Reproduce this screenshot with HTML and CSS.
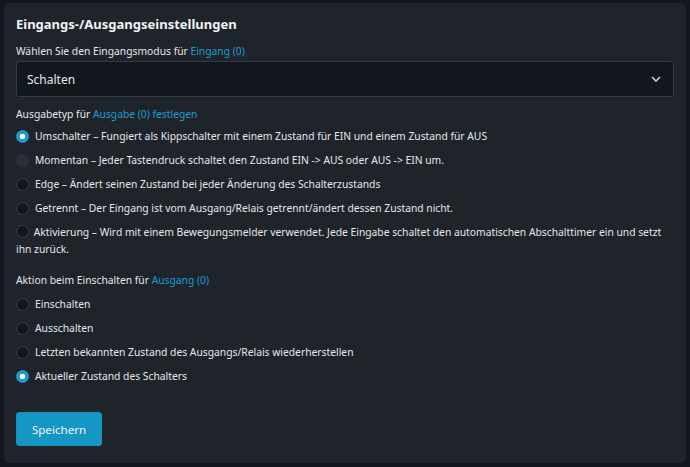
FILE: index.html
```html
<!DOCTYPE html>
<html lang="de">
<head>
<meta charset="utf-8">
<link rel="stylesheet" href="styles.css">
</head>
<body>
<div class="card">
  <h1 class="title">Eingangs-/Ausgangseinstellungen</h1>
  <div class="label">Wählen Sie den Eingangsmodus für <span class="link">Eingang (0)</span></div>
  <div class="select">
    <span>Schalten</span>
    <svg class="chev" width="10" height="6" viewBox="0 0 10 6"><path d="M1 1l4 4 4-4" fill="none" stroke="#c9ced4" stroke-width="1.6"/></svg>
  </div>
  <div class="label">Ausgabetyp für <span class="link">Ausgabe (0) festlegen</span></div>
  <div class="group">
    <div class="opt"><span class="radio on"></span><span>Umschalter – Fungiert als Kippschalter mit einem Zustand für EIN und einem Zustand für AUS</span></div>
    <div class="opt"><span class="radio dim"></span><span>Momentan – Jeder Tastendruck schaltet den Zustand EIN -&gt; AUS oder AUS -&gt; EIN um.</span></div>
    <div class="opt"><span class="radio"></span><span>Edge – Ändert seinen Zustand bei jeder Änderung des Schalterzustands</span></div>
    <div class="opt"><span class="radio"></span><span>Getrennt – Der Eingang ist vom Ausgang/Relais getrennt/ändert dessen Zustand nicht.</span></div>
    <div class="opt wrap"><span class="radio"></span> Aktivierung – Wird mit einem Bewegungsmelder verwendet. Jede Eingabe schaltet den automatischen Abschalttimer ein und setzt ihn zurück.</div>
  </div>
  <div class="label second">Aktion beim Einschalten für <span class="link">Ausgang (0)</span></div>
  <div class="group second">
    <div class="opt"><span class="radio"></span><span>Einschalten</span></div>
    <div class="opt"><span class="radio"></span><span>Ausschalten</span></div>
    <div class="opt"><span class="radio"></span><span>Letzten bekannten Zustand des Ausgangs/Relais wiederherstellen</span></div>
    <div class="opt"><span class="radio on"></span><span>Aktueller Zustand des Schalters</span></div>
  </div>
  <button class="btn">Speichern</button>
</div>
</body>
</html>
```
FILE: styles.css
```css
html, body {
  margin: 0;
  padding: 0;
  background: #13171d;
}
body {
  padding: 3px 4px 4px 4px;
  font-family: "Noto Sans", "Open Sans", sans-serif;
  font-size: 10.3px;
  color: #e4e7ea;
}
.card {
  background: #1f242b;
  border-radius: 6px;
  padding: 12px 12px 16px 12px;
  height: 460px;
  box-sizing: border-box;
}
.title {
  margin: 0 0 10px 0;
  font-size: 13px;
  font-weight: 700;
  line-height: 18px;
  color: #f0f2f4;
}
.label {
  line-height: 16px;
  margin-bottom: 2px;
}
.label.second {
  margin-top: 14px;
}
.link {
  color: #1e9bd2;
}
.select {
  display: flex;
  align-items: center;
  justify-content: space-between;
  height: 36px;
  box-sizing: border-box;
  background: #12171d;
  border: 1px solid #343b44;
  border-radius: 3px;
  padding: 0 10px 0 10px;
  margin-bottom: 9px;
  font-size: 12px;
}
.chev {
  margin-right: 2px;
}
.group {
  display: flex;
  flex-direction: column;
  gap: 8px;
  margin-top: 6px;
}
.group.second {
  margin-top: 8px;
}
.opt {
  display: flex;
  align-items: center;
  gap: 6px;
  line-height: 16px;
}
.opt.wrap {
  display: block;
  line-height: 17px;
}
.radio {
  display: inline-block;
  flex: none;
  width: 13px;
  height: 13px;
  box-sizing: border-box;
  border-radius: 50%;
  background: #13171d;
  border: 1px solid #3b424b;
  vertical-align: -2px;
}
.wrap .radio {
  margin-right: 2px;
}
.radio.on {
  border-color: #1d9ad1;
  background: radial-gradient(circle, #ffffff 0 2.6px, #1d9ad1 3px);
}
.radio.dim {
  background: #2a3038;
  border-color: #2a3038;
}
.btn {
  margin-top: 28px;
  width: 86px;
  height: 34px;
  background: #1597c4;
  border: 1px solid #1590bb;
  border-radius: 3px;
  color: #f2f6f8;
  font-family: "Noto Sans", "Open Sans", sans-serif;
  font-size: 11.6px;
  padding: 0;
}
```
